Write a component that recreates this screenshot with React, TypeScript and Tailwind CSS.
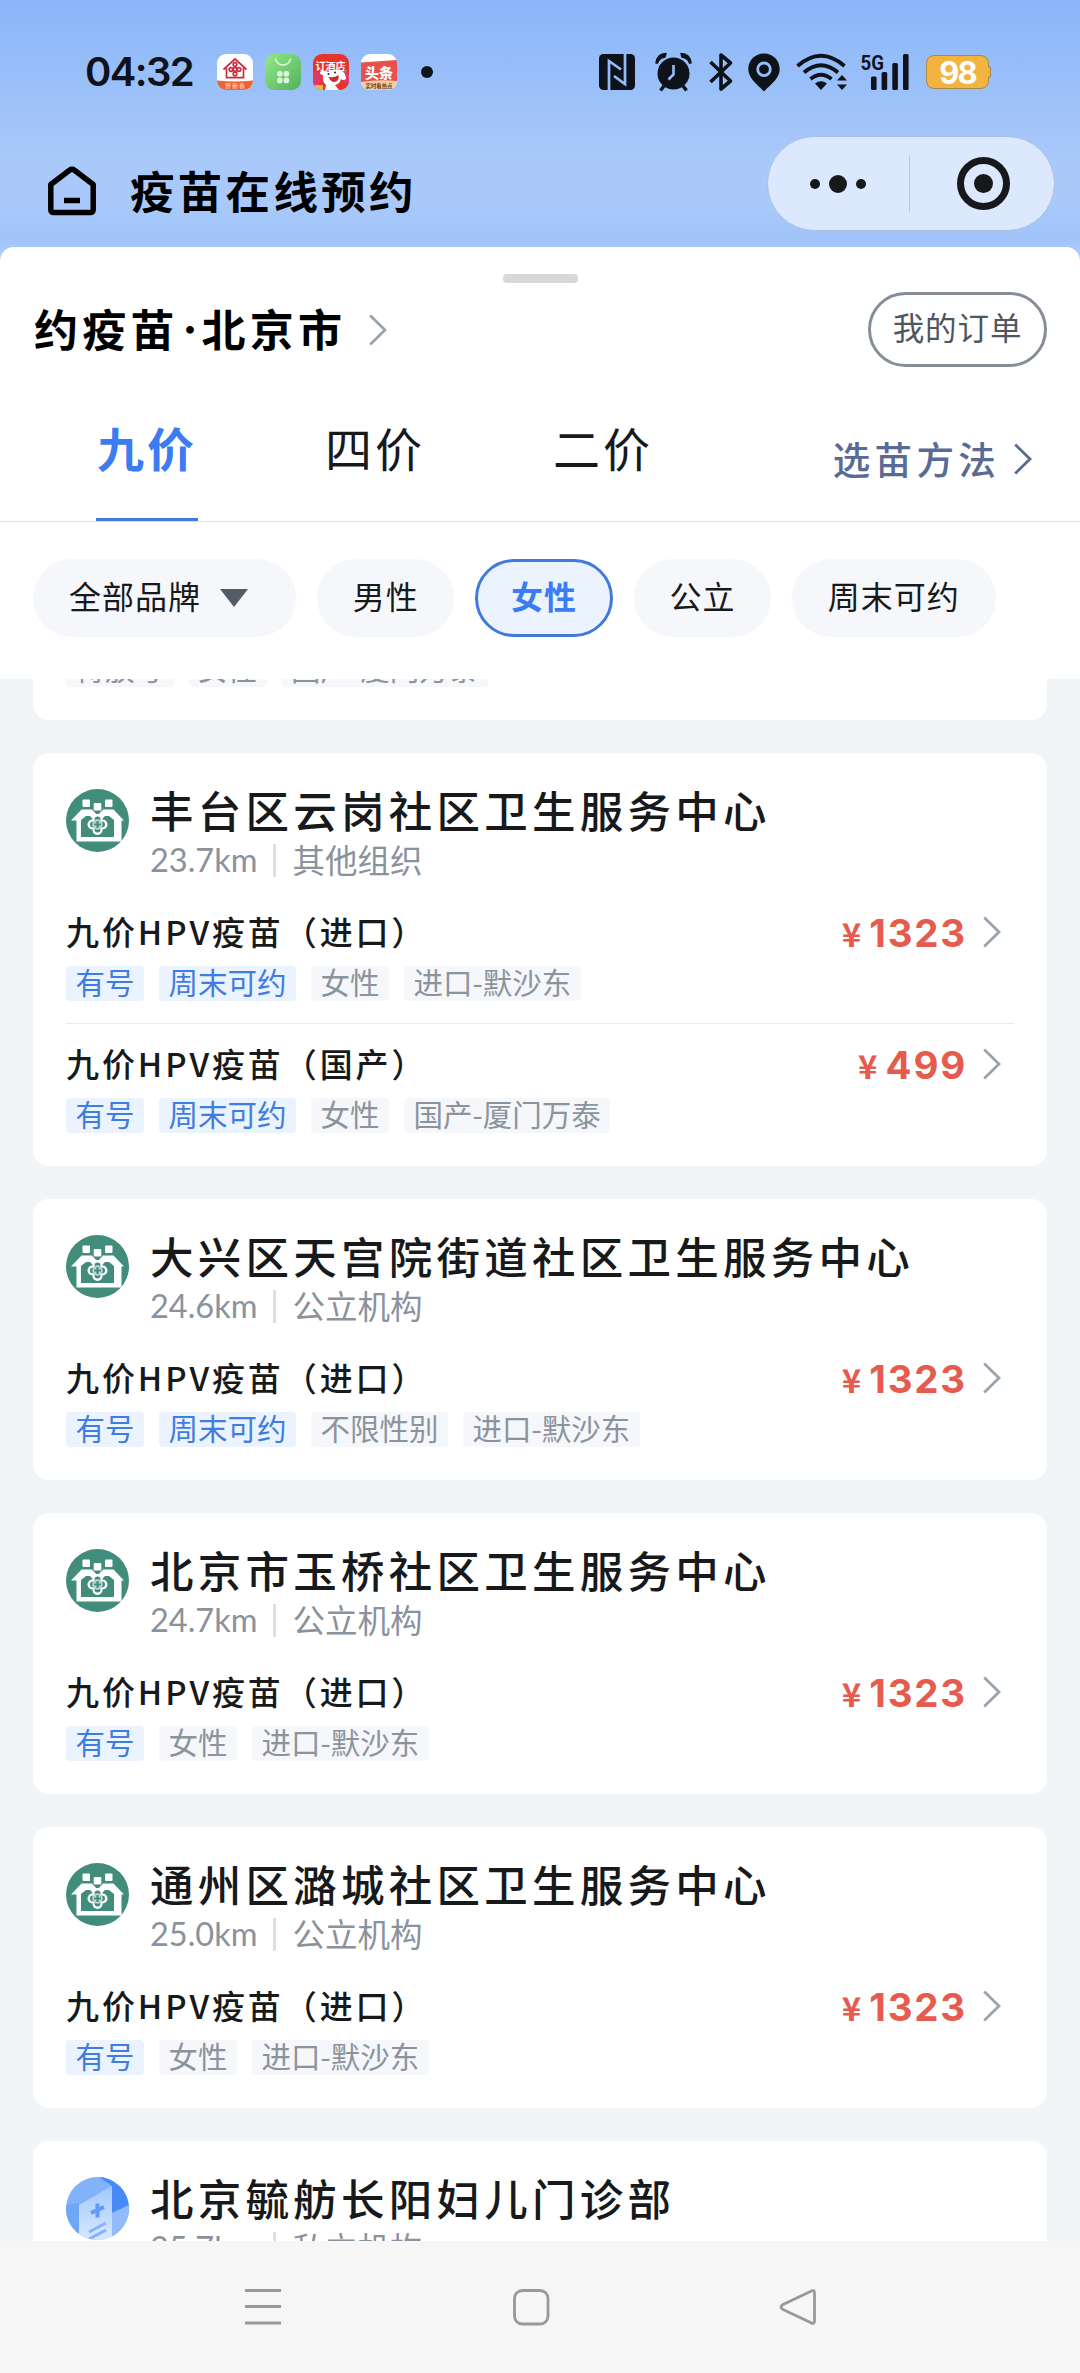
import { useState } from 'react';

interface Tag {
  label: string;
  active?: boolean;
}

interface Product {
  name: string;
  price: string;
  tags: Tag[];
}

interface Clinic {
  name: string;
  distance: string;
  kind: string;
  logo: 'community' | 'private';
  products: Product[];
}

const available: Tag = { label: '有号', active: true };
const weekend: Tag = { label: '周末可约', active: true };

const clinics: Clinic[] = [
  {
    name: '丰台区云岗社区卫生服务中心',
    distance: '23.7km',
    kind: '其他组织',
    logo: 'community',
    products: [
      { name: '九价HPV疫苗（进口）', price: '1323', tags: [available, weekend, { label: '女性' }, { label: '进口-默沙东' }] },
      { name: '九价HPV疫苗（国产）', price: '499', tags: [available, weekend, { label: '女性' }, { label: '国产-厦门万泰' }] },
    ],
  },
  {
    name: '大兴区天宫院街道社区卫生服务中心',
    distance: '24.6km',
    kind: '公立机构',
    logo: 'community',
    products: [
      { name: '九价HPV疫苗（进口）', price: '1323', tags: [available, weekend, { label: '不限性别' }, { label: '进口-默沙东' }] },
    ],
  },
  {
    name: '北京市玉桥社区卫生服务中心',
    distance: '24.7km',
    kind: '公立机构',
    logo: 'community',
    products: [
      { name: '九价HPV疫苗（进口）', price: '1323', tags: [available, { label: '女性' }, { label: '进口-默沙东' }] },
    ],
  },
  {
    name: '通州区潞城社区卫生服务中心',
    distance: '25.0km',
    kind: '公立机构',
    logo: 'community',
    products: [
      { name: '九价HPV疫苗（进口）', price: '1323', tags: [available, { label: '女性' }, { label: '进口-默沙东' }] },
    ],
  },
  {
    name: '北京毓舫长阳妇儿门诊部',
    distance: '25.7km',
    kind: '私立机构',
    logo: 'private',
    products: [],
  },
];

const tabs = ['九价', '四价', '二价'];
const filters = ['男性', '女性', '公立', '周末可约'];

const Chevron = ({ className }: { className: string }) => (
  <svg viewBox="0 0 18 32" fill="none" stroke="currentColor" strokeWidth="2.8" className={`h-8 w-[18px] shrink-0 ${className}`}>
    <path d="M1.2 1.5 16 16 1.2 30.5" />
  </svg>
);

const AppIcons = () => (
  <div className="ml-[25px] flex gap-3">
    <svg viewBox="0 0 36 36" className="size-9 rounded-[9px] bg-white">
      <path d="M0 26.5Q18 28.5 36 26.5V36H0Z" fill="#ec6338" />
      <g fill="none" stroke="#c92f3f" strokeWidth="1.7">
        <path d="M6.5 15.5 18 5l11.5 10.5M9.5 14v9.7h17V14" />
        <circle cx="18" cy="10.5" r="1.8" />
        <circle cx="14" cy="15.5" r="1.8" />
        <circle cx="22" cy="15.5" r="1.8" />
        <circle cx="18" cy="15.5" r="1.8" />
        <circle cx="18" cy="20" r="1.8" />
      </g>
      <text x="18.5" y="34" fontSize="6" textAnchor="middle" fill="#ffe3c0" letterSpacing="1">贺新春</text>
    </svg>
    <svg viewBox="0 0 36 36" className="size-9 rounded-[9px]">
      <defs>
        <linearGradient id="bag" x1="0" y1="0" x2="1" y2="1">
          <stop offset="0" stopColor="#94e98a" />
          <stop offset="1" stopColor="#53b05c" />
        </linearGradient>
      </defs>
      <rect width="36" height="36" fill="url(#bag)" />
      <path d="M10.5 5a7.7 7.7 0 0 0 15 0" fill="none" stroke="#d8f8cf" strokeWidth="1.6" strokeLinecap="round" />
      <g fill="#dcf7d8">
        <rect x="12" y="17" width="5.6" height="5.6" rx="2.3" />
        <rect x="18.6" y="17" width="5.6" height="5.6" rx="2.3" />
        <rect x="12" y="23.6" width="5.6" height="5.6" rx="2.3" />
        <rect x="18.6" y="23.6" width="5.6" height="5.6" rx="2.3" />
      </g>
    </svg>
    <svg viewBox="0 0 36 36" className="size-9 rounded-[9px] bg-[#e5342b]">
      <path d="M0 17l9 3-3 16H0zM29 17l7 3v10l-5-2z" fill="#e03a68" />
      <text x="17.5" y="15.5" fontSize="10" fontWeight="700" textAnchor="middle" fill="#fff">订酒店</text>
      <path d="M7 18q3-3 8 0 6-4 12-1 5-1 6 8-3 2-5 0-1 5-6 6l4 5H12l1-5q-4-3-3-10-3 0-3-3Z" fill="#fff" />
      <path d="M15.5 23q6 1 10-2 1 6-4 7-4 0-6-5Z" fill="#c62b2e" />
      <circle cx="15.5" cy="20" r="1" fill="#222" />
      <circle cx="22" cy="18.5" r="1" fill="#222" />
      <path d="M2 31h8v5H2z" fill="#f3bb3c" />
      <path d="M31 15l3 1-2 3z" fill="#4c9ee8" />
    </svg>
    <svg viewBox="0 0 36 36" className="size-9 rounded-[9px] bg-white">
      <path d="M0 8.5 36 6v22H0Z" fill="#e8504b" />
      <path d="M0 28q18-3 36-1v9H0Z" fill="#f6d0a0" />
      <text x="18" y="23.5" fontSize="14" fontWeight="900" textAnchor="middle" fill="#fff">头条</text>
      <text x="18" y="34" fontSize="5.4" fontWeight="700" textAnchor="middle" fill="#6a3a12">实时看热点</text>
    </svg>
  </div>
);

const StatusBar = () => (
  <div className="flex h-[126px] items-center pt-[18px] pl-[85px] text-[#0e131b]">
    <span className="w-[107px] font-['Inter'] text-[40px] leading-none font-semibold tracking-[-1.6px] whitespace-nowrap">04:32</span>
    <AppIcons />
    <div className="ml-6 size-3 rounded-full bg-[#0e131b]" />
    <svg viewBox="0 0 310 40" fill="currentColor" className="ml-[166px] h-10 w-[310px]">
      <rect x="0" y="2" width="36" height="36" rx="4.5" />
      <path d="M10 38V9l12 8.5M26 2v30l-11-8" fill="none" stroke="#95bcf8" strokeWidth="2.7" />
      <circle cx="74.5" cy="21.5" r="16" />
      <path d="M57 11Q58 2 67 1.5L66 5q-6 1-7.5 6zM92 11q-1-9-10-9.5l1 3.5q6 1 7.5 6z" stroke="currentColor" strokeWidth="1.5" strokeLinejoin="round" />
      <path d="m65 34-3.500 4.500M84 34l3.500 4.500" stroke="currentColor" strokeWidth="3.5" />
      <path d="M74.5 13v9.5l-5 5" fill="none" stroke="#98bef8" strokeWidth="2.6" />
      <path d="m111.500 10 20 19-9.500 8V3l9.500 8-20 19" fill="none" stroke="currentColor" strokeWidth="3.6" strokeLinejoin="round" />
      <path fillRule="evenodd" d="M165 1.5c9 0 15.7 7 15.7 15.5 0 9-8 14.500-15.700 22.500-7.700-8-15.700-13.500-15.700-22.500C149.300 8.500 156 1.500 165 1.500Zm0 8a7.700 7.700 0 1 0 0 15.400 7.700 7.700 0 0 0 0-15.400Zm0 2.900a4.900 4.900 0 1 1 0 9.800 4.900 4.900 0 0 1 0-9.800Z" />
      <g fill="none" stroke="currentColor" strokeWidth="3.8">
        <path d="M198.500 14q23.500-20.500 47 0" />
        <path d="M205 20.500q17-14.500 34 0" />
        <path d="M211.500 27q10.500-8.500 21 0" />
      </g>
      <path d="M216 31.500q6-4.500 12 0l-6 6.500zM238 28.500l5-5.500 5 5.500zM238 32.500l5 5.500 5-5.500z" />
      <text x="261.5" y="17.5" fontSize="21" fontWeight="700" fontFamily="Roboto" textLength="23.5" lengthAdjust="spacingAndGlyphs">5G</text>
      <rect x="272" y="24.5" width="5.6" height="13.5" rx="1.5" />
      <rect x="282.6" y="20" width="5.6" height="18" rx="1.5" />
      <rect x="293.3" y="11" width="5.6" height="27" rx="1.5" />
      <rect x="304" y="2" width="5.6" height="36" rx="1.5" />
    </svg>
    <div className="ml-[17px] flex h-[34px] w-[63px] items-center justify-center rounded-lg border border-[#a58a4c] bg-[#f2b43f]">
      <span className="font-['Inter'] text-[31px] leading-none font-bold tracking-[-2px] text-white">98</span>
    </div>
    <div className="-ml-px h-3 w-[3px] rounded-r-sm border border-l-0 border-[#a58a4c] bg-[#f2b43f]" />
  </div>
);

const TitleBar = () => (
  <div className="flex h-[121px] items-start justify-between pr-[25px] pl-12">
    <div className="mt-10 flex items-center">
      <svg viewBox="0 0 48 50" fill="none" stroke="#000" strokeWidth="5.5" strokeLinejoin="round" className="h-[50px] w-12">
        <path d="M2.8 18.5 21.5 4.3Q24 2.5 26.5 4.3L45.2 18.5V43.5Q45.2 46.5 42.2 46.5H5.8Q2.8 46.5 2.8 43.5Z" />
        <path d="M16 34.5h16" />
      </svg>
      <h1 className="ml-[34px] pb-0.5 text-[44.5px] leading-[48px] font-bold tracking-[3.3px]">疫苗在线预约</h1>
    </div>
    <div className="mt-2.5 flex h-[95px] w-[288px] items-center rounded-full border border-[#a9bfe4] bg-[#dbe8fd] text-[#16181a]">
      <div className="flex flex-1 items-center justify-center gap-[9px]">
        <span className="size-2.5 rounded-full bg-current" />
        <span className="size-[18px] rounded-full bg-current" />
        <span className="size-2.5 rounded-full bg-current" />
      </div>
      <div className="h-[57px] w-px bg-[#b9c8de]" />
      <div className="flex flex-1 items-center justify-center pl-1">
        <div className="flex size-[53px] items-center justify-center rounded-full border-7 border-current">
          <span className="size-[19px] rounded-full bg-current" />
        </div>
      </div>
    </div>
  </div>
);

const CommunityLogo = () => (
  <svg viewBox="0 0 63 63" className="size-[63px] shrink-0">
    <circle cx="31.5" cy="31.5" r="31.5" fill="#418c7b" />
    <g fill="#fff">
      <rect x="16.5" y="10.5" width="7.5" height="7.5" rx="1" />
      <rect x="27.7" y="14" width="7.6" height="7.5" rx="1" />
      <rect x="39" y="10.5" width="7.5" height="7.5" rx="1" />
      <path d="M5 31.5 15.5 20.5H26l5.5 6 5.5-6h10.5L58 31.5h-2.5V52.5H10.500V31.500H5ZM15 31v17h33V31l-5-4h-4l-3 3h-9l-3-3h-4Z" fillRule="evenodd" />
      <circle cx="31.5" cy="30" r="5" />
      <circle cx="26.5" cy="35.5" r="5" />
      <circle cx="36.5" cy="35.5" r="5" />
      <circle cx="31.5" cy="41" r="5" />
    </g>
    <g fill="#418c7b">
      <circle cx="31.5" cy="30.5" r="3" />
      <circle cx="27" cy="35.5" r="3" />
      <circle cx="36" cy="35.5" r="3" />
      <circle cx="31.5" cy="40.5" r="3" />
    </g>
    <path d="M31.5 30.5v10M26.5 35.5h10" stroke="#c9dfda" strokeWidth="4.4" />
    <path d="M31.5 32v7M28 35.5h7" stroke="#418c7b" strokeWidth="2.2" />
  </svg>
);

const PrivateLogo = () => (
  <svg viewBox="0 0 63 63" className="size-[63px] shrink-0">
    <defs>
      <clipPath id="disc"><circle cx="31.5" cy="31.5" r="31.5" /></clipPath>
      <linearGradient id="wall" x1="0" y1="0" x2="0" y2="1">
        <stop offset="0" stopColor="#a3c8fb" />
        <stop offset="1" stopColor="#d6e8ff" />
      </linearGradient>
    </defs>
    <g clipPath="url(#disc)">
      <path d="M0 0h63v63H0z" fill="#82b3fa" />
      <path d="M33 0h30v36L46 40V9z" fill="#468af6" />
      <path d="M0 28l13-2v37H0z" fill="#6ea6f8" />
      <path d="M46 36l17-8v35H46z" fill="#90bcfb" />
      <path d="M13 28 46 9v54H13z" fill="url(#wall)" />
      <path d="m25 36 13-6M31.500 26.500v14" stroke="#5f9bf7" strokeWidth="4" />
      <path d="m23 55 17-9M23 62l17-9" stroke="#84b3f9" strokeWidth="3" />
    </g>
  </svg>
);

const TagList = ({ tags }: { tags: Tag[] }) => (
  <div className="flex gap-[15px]">
    {tags.map((tag) => (
      <span
        key={tag.label}
        className={`h-[35px] rounded px-[9.5px] text-[29.5px] leading-[31px] whitespace-nowrap ${
          tag.active ? 'bg-[#ebf3fe] text-[#3f7de0]' : 'bg-[#f5f7fa] text-[#8b939d]'
        }`}
      >
        {tag.label}
      </span>
    ))}
  </div>
);

const ProductRow = ({ product, first }: { product: Product; first: boolean }) => (
  <div className={first ? 'mt-[22px]' : 'mt-[22px] border-t border-[#eaedf0] pt-[15px]'}>
    <div className="flex h-[50px] items-center justify-between pr-[13px]">
      <span className="pb-0.5 text-[33px] leading-[46px] font-medium tracking-[2.9px] text-[#17191b]">{product.name}</span>
      <div className="flex items-center">
        <div className="flex items-baseline pt-[3px] font-bold text-[#e65b4d]">
          <span className="mr-2 text-[33px] leading-none">¥</span>
          <span className="font-['Inter'] text-[38.5px] leading-none tracking-[1.8px]">{product.price}</span>
        </div>
        <Chevron className="ml-4 text-[#9aa4b1]" />
      </div>
    </div>
    <div className="mt-[9px]">
      <TagList tags={product.tags} />
    </div>
  </div>
);

const ClinicCard = ({ clinic }: { clinic: Clinic }) => (
  <article className="shrink-0 rounded-2xl bg-white px-[33px] pt-9 pb-[33px]">
    <div className="flex h-24">
      {clinic.logo === 'community' ? <CommunityLogo /> : <PrivateLogo />}
      <div className="ml-[21px]">
        <h2 className="text-[43.5px] leading-[42px] font-medium tracking-[4.25px] whitespace-nowrap text-[#17191b]">{clinic.name}</h2>
        <div className="mt-1 flex h-[50px] items-center text-[32.5px] leading-[46px] text-[#8a929c]">
          <span className="font-['Lato']">{clinic.distance}</span>
          <span className="mr-4 ml-4 h-[33px] w-[3px] bg-[#dbe0e6]" />
          <span className="pb-0.5">{clinic.kind}</span>
        </div>
      </div>
    </div>
    {clinic.products.map((product, index) => (
      <ProductRow key={product.name} product={product} first={index === 0} />
    ))}
  </article>
);

const SheetHeader = () => {
  const [activeTab, setActiveTab] = useState('九价');
  const [activeFilter, setActiveFilter] = useState('女性');

  return (
    <div className="h-[432px] shrink-0 rounded-t-[14px] bg-white pt-[27px]">
      <div className="mx-auto h-[9px] w-[75px] rounded bg-[#d8d8d8]" />
      <div className="mt-[9px] flex h-[75px] items-center justify-between pr-[33px] pl-[34px]">
        <button className="flex items-center">
          <span className="flex pb-[3px] text-[44px] leading-[46px] font-bold tracking-[4.2px]">
            约疫苗
            <span className="flex w-[23px] justify-center text-[30px] tracking-normal">·</span>
            北京市
          </span>
          <Chevron className="ml-[23px] text-[#9aa4b1]" />
        </button>
        <button className="h-[75px] w-[179px] rounded-full border-3 border-[#858e98] pb-1.5 text-[31.5px] tracking-[0.9px] text-[#4d5661]">
          我的订单
        </button>
      </div>

      <div className="mt-[29px] flex h-[126px] justify-between border-b-[1.5px] border-[#dce0e8] pr-12">
        <div className="flex gap-[126px] pl-24">
          {tabs.map((tab) => (
            <button
              key={tab}
              onClick={() => setActiveTab(tab)}
              className={`flex h-[125px] w-[102px] justify-center border-b-3 pt-[26px] text-[47px] leading-[50px] tracking-[3px] whitespace-nowrap ${
                tab === activeTab ? 'border-[#4179dc] font-bold text-[#3b7cf2]' : 'border-transparent text-[#17191b]'
              }`}
            >
              {tab}
            </button>
          ))}
        </div>
        <button className="mt-[39px] flex h-12 items-center text-[#596a95]">
          <span className="pb-0.5 text-[37.5px] leading-[44px] font-medium tracking-[4.3px]">选苗方法</span>
          <Chevron className="ml-3.5" />
        </button>
      </div>

      <div className="mt-[37px] flex gap-[21px] px-[33px]">
        <button className="flex h-[78px] w-[263px] items-center rounded-full bg-[#f5f7fb] pl-9 text-[#17191b]">
          <span className="pb-1.5 text-[32px] tracking-[1px]">全部品牌</span>
          <svg viewBox="0 0 28 18" className="ml-[19px] h-[18px] w-7">
            <path d="M0 0h28L14 18Z" fill="#545c65" />
          </svg>
        </button>
        {filters.map((filter) => (
          <button
            key={filter}
            onClick={() => setActiveFilter(filter)}
            className={`h-[78px] rounded-full border-3 px-[32.7px] pb-1.5 text-[32px] leading-[44px] tracking-[1px] whitespace-nowrap ${
              filter === activeFilter
                ? 'border-[#4179dc] bg-[#ebf3fe] font-bold text-[#3b7cf2]'
                : 'border-[#f5f7fb] bg-[#f5f7fb] text-[#17191b]'
            }`}
          >
            {filter}
          </button>
        ))}
      </div>
    </div>
  );
};

const NavBar = () => (
  <div className="flex h-[132px] shrink-0 bg-[#f6f6f6] pt-[47px] pl-[244px] text-[#999]">
    <svg viewBox="0 0 38 38" fill="none" stroke="currentColor" strokeWidth="3" className="size-[38px]">
      <path d="M1 2.5h36M1 18.5h36M1 35h36" />
    </svg>
    <svg viewBox="0 0 38 38" fill="none" stroke="currentColor" strokeWidth="2.8" className="ml-[230px] size-[38px]">
      <rect x="2.5" y="2.5" width="33.5" height="33.5" rx="8" />
    </svg>
    <svg viewBox="0 0 38 38" fill="none" stroke="currentColor" strokeWidth="2.8" strokeLinejoin="round" className="ml-[229px] size-[38px]">
      <path d="M31.5 3.5Q35.5 1 35.5 5V33Q35.5 37 31.5 34.5L4 21.500Q0 19 4 16.500Z" />
    </svg>
  </div>
);

export default function App() {
  return (
    <div className="flex h-[2373px] w-[1080px] flex-col overflow-hidden bg-[#f2f5f8] font-['Noto_Sans_CJK_SC',sans-serif]">
      <header className="h-[261px] shrink-0 bg-[linear-gradient(180deg,#8ab6f8_0px,#9ac0f9_85px,#a0c2f9_110px,#a9c9fa_160px,#a9c9fa_205px,#a0c3f9_240px,#b5d2fc_261px)]">
        <StatusBar />
        <TitleBar />
      </header>
      <main className="-mt-3.5 flex h-[1994px] shrink-0 flex-col overflow-hidden">
        <SheetHeader />
        <div className="flex flex-1 flex-col gap-[33px] overflow-hidden px-[33px]">
          {/* tail of the card that is scrolled under the header */}
          <article className="flex h-[41px] shrink-0 flex-col justify-end overflow-hidden rounded-b-2xl bg-white px-[33px] pb-[33px]">
            <TagList tags={[{ label: '待放号' }, { label: '女性' }, { label: '国产-厦门万泰' }]} />
          </article>
          {clinics.map((clinic) => (
            <ClinicCard key={clinic.name} clinic={clinic} />
          ))}
        </div>
      </main>
      <NavBar />
    </div>
  );
}
